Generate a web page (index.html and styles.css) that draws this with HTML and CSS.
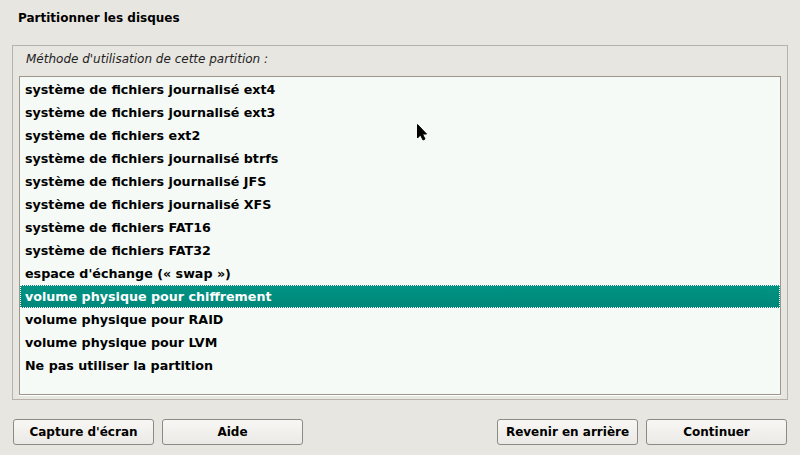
FILE: index.html
```html
<!DOCTYPE html>
<html lang="fr">
<head>
<meta charset="utf-8">
<title>Partitionner les disques</title>
<link rel="stylesheet" href="styles.css">
</head>
<body>
<div class="window">
  <h1 class="title">Partitionner les disques</h1>
  <div class="frame">
    <div class="label">Méthode d'utilisation de cette partition :</div>
    <ul class="list">
      <li class="row">système de fichiers journalisé ext4</li>
      <li class="row">système de fichiers journalisé ext3</li>
      <li class="row">système de fichiers ext2</li>
      <li class="row">système de fichiers journalisé btrfs</li>
      <li class="row">système de fichiers journalisé JFS</li>
      <li class="row">système de fichiers journalisé XFS</li>
      <li class="row">système de fichiers FAT16</li>
      <li class="row">système de fichiers FAT32</li>
      <li class="row">espace d'échange (« swap »)</li>
      <li class="row selected">volume physique pour chiffrement</li>
      <li class="row">volume physique pour RAID</li>
      <li class="row">volume physique pour LVM</li>
      <li class="row">Ne pas utiliser la partition</li>
    </ul>
  </div>
  <div class="footer">
    <div class="group">
      <button class="btn">Capture d'écran</button>
      <button class="btn">Aide</button>
    </div>
    <div class="group">
      <button class="btn">Revenir en arrière</button>
      <button class="btn">Continuer</button>
    </div>
  </div>
  <svg class="cursor" width="12" height="19" viewBox="0 0 12 19">
    <path d="M0.5 0.5 L0.5 14 L3.5 11 L6 16 L8 15 L5.5 10 L9.5 10 Z" fill="#000" stroke="#000" stroke-width="1"/>
  </svg>
</div>
</body>
</html>
```

FILE: styles.css
```css
html, body {
  margin: 0;
  padding: 0;
}
body {
  background: #e8e6e1;
  font-family: "DejaVu Sans", sans-serif;
  font-size: 12px;
  color: #000;
}
.window {
  position: relative;
  width: 800px;
  height: 455px;
  overflow: hidden;
}
.title {
  margin: 0;
  padding: 11px 0 0 18px;
  height: 45px;
  box-sizing: border-box;
  font-size: 12px;
  font-weight: bold;
  line-height: 15px;
}
.frame {
  margin-left: 12px;
  width: 776px;
  height: 355px;
  box-sizing: border-box;
  border: 1px solid #b7b3aa;
  padding: 0 6px 4px 6px;
  display: flex;
  flex-direction: column;
}
.label {
  font-style: italic;
  color: #222;
  padding-left: 7px;
  height: 30px;
  line-height: 27px;
}
.list {
  list-style: none;
  margin: 0;
  padding: 1px 0 0 0;
  flex: 1;
  background: #f5faf7;
  border: 1px solid #9e968a;
  box-shadow: 0 1px 0 #ffffff;
}
.row {
  height: 23px;
  line-height: 23px;
  padding-left: 5px;
  font-size: 12.7px;
  font-weight: bold;
  white-space: nowrap;
}
.row.selected {
  background: linear-gradient(#009383, #00877a);
  color: #ffffff;
  outline: 1px dotted #ffffff;
  outline-offset: -1px;
}
.footer {
  display: flex;
  justify-content: space-between;
  padding: 19px 13px 0 13px;
}
.group {
  display: flex;
  gap: 8px;
}
.btn {
  width: 141px;
  height: 26px;
  border: 1px solid #8d8a84;
  border-radius: 3px;
  background: linear-gradient(#f8f7f5, #ebe9e5);
  font-family: "DejaVu Sans", sans-serif;
  font-size: 12px;
  font-weight: bold;
  color: #000;
  padding: 0;
}
.cursor {
  position: absolute;
  left: 417px;
  top: 124px;
}
```
